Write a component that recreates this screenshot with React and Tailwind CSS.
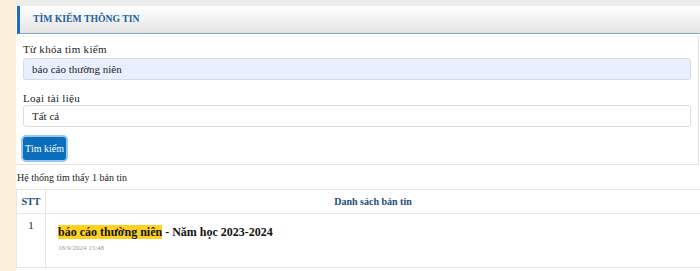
export default function App() {
  const serif = { fontFamily: '"Liberation Serif", "Times New Roman", serif' };
  return (
    <div className="flex w-[700px] h-[271px] overflow-hidden bg-white text-[#222]" style={serif}>
      <div className="w-[16px] shrink-0 bg-[#fdf0d8]" />
      <div className="flex-1 flex flex-col min-w-0">
        <div className="h-[6px] bg-[#ececec]" />
        <div className="h-[28px] flex items-center border-l-[3px] border-[#1b6dc1] border-b border-b-[#8aa6c4] bg-gradient-to-b from-[#ffffff] to-[#e4e4e4] pl-[13px] ml-[1px]">
          <span className="text-[9.7px] font-bold text-[#1e5f9c]">TÌM KIẾM THÔNG TIN</span>
        </div>
        <div className="border-r border-b border-[#e3e3e3] px-[7px] pt-[5px] pb-[4px] mr-[1px] border-t border-t-[#f0f0f0] mt-[2px]">
          <div className="text-[11px] tracking-[0.3px] leading-[14px] mb-[2px]">Từ khóa tìm kiếm</div>
          <div className="h-[22px] flex items-center bg-[#e8f0fe] border border-[#d5dce6] rounded-[3px] px-[8px] text-[11px]">báo cáo thường niên</div>
          <div className="text-[11px] tracking-[0.3px] leading-[14px] mt-[11px]">Loại tài liệu</div>
          <div className="h-[22px] flex items-center bg-white border border-[#dcdcdc] rounded-[3px] px-[8px] text-[11px]">Tất cả</div>
          <div className="mt-[10px]">
            <button className="h-[23px] w-[43px] flex items-center justify-center rounded-[3px] bg-[#0b6ebd] text-white text-[10px] font-normal ring-2 ring-[#9cc6ee]">Tìm kiếm</button>
          </div>
        </div>
        <div className="text-[10px] leading-[14px] pl-[1px] mt-[6px]">Hệ thống tìm thấy 1 bản tin</div>
        <div className="mt-[4px] border-t border-l border-[#e6e6e6]">
          <div className="flex h-[24px] border-b border-[#e6e6e6] text-[10px] font-bold text-[#1c4c78]">
            <div className="w-[29px] shrink-0 flex items-center justify-center border-r border-[#e6e6e6]">STT</div>
            <div className="flex-1 flex items-center justify-center">Danh sách bản tin</div>
          </div>
          <div className="flex h-[54px] border-b border-[#e6e6e6]">
            <div className="w-[29px] shrink-0 flex justify-center border-r border-[#e6e6e6] pt-[3px] text-[11px]">1</div>
            <div className="flex-1 pl-[12px] pt-[10px]">
              <div className="text-[12px] font-bold leading-[16px] text-[#111]">
                <span className="bg-[#ffd21f]">báo cáo thường niên</span> - Năm học 2023-2024
              </div>
              <div className="text-[7px] text-[#9a9a9a] mt-[3px]">18/9/2024 15:48</div>
            </div>
          </div>
        </div>
      </div>
    </div>
  );
}
